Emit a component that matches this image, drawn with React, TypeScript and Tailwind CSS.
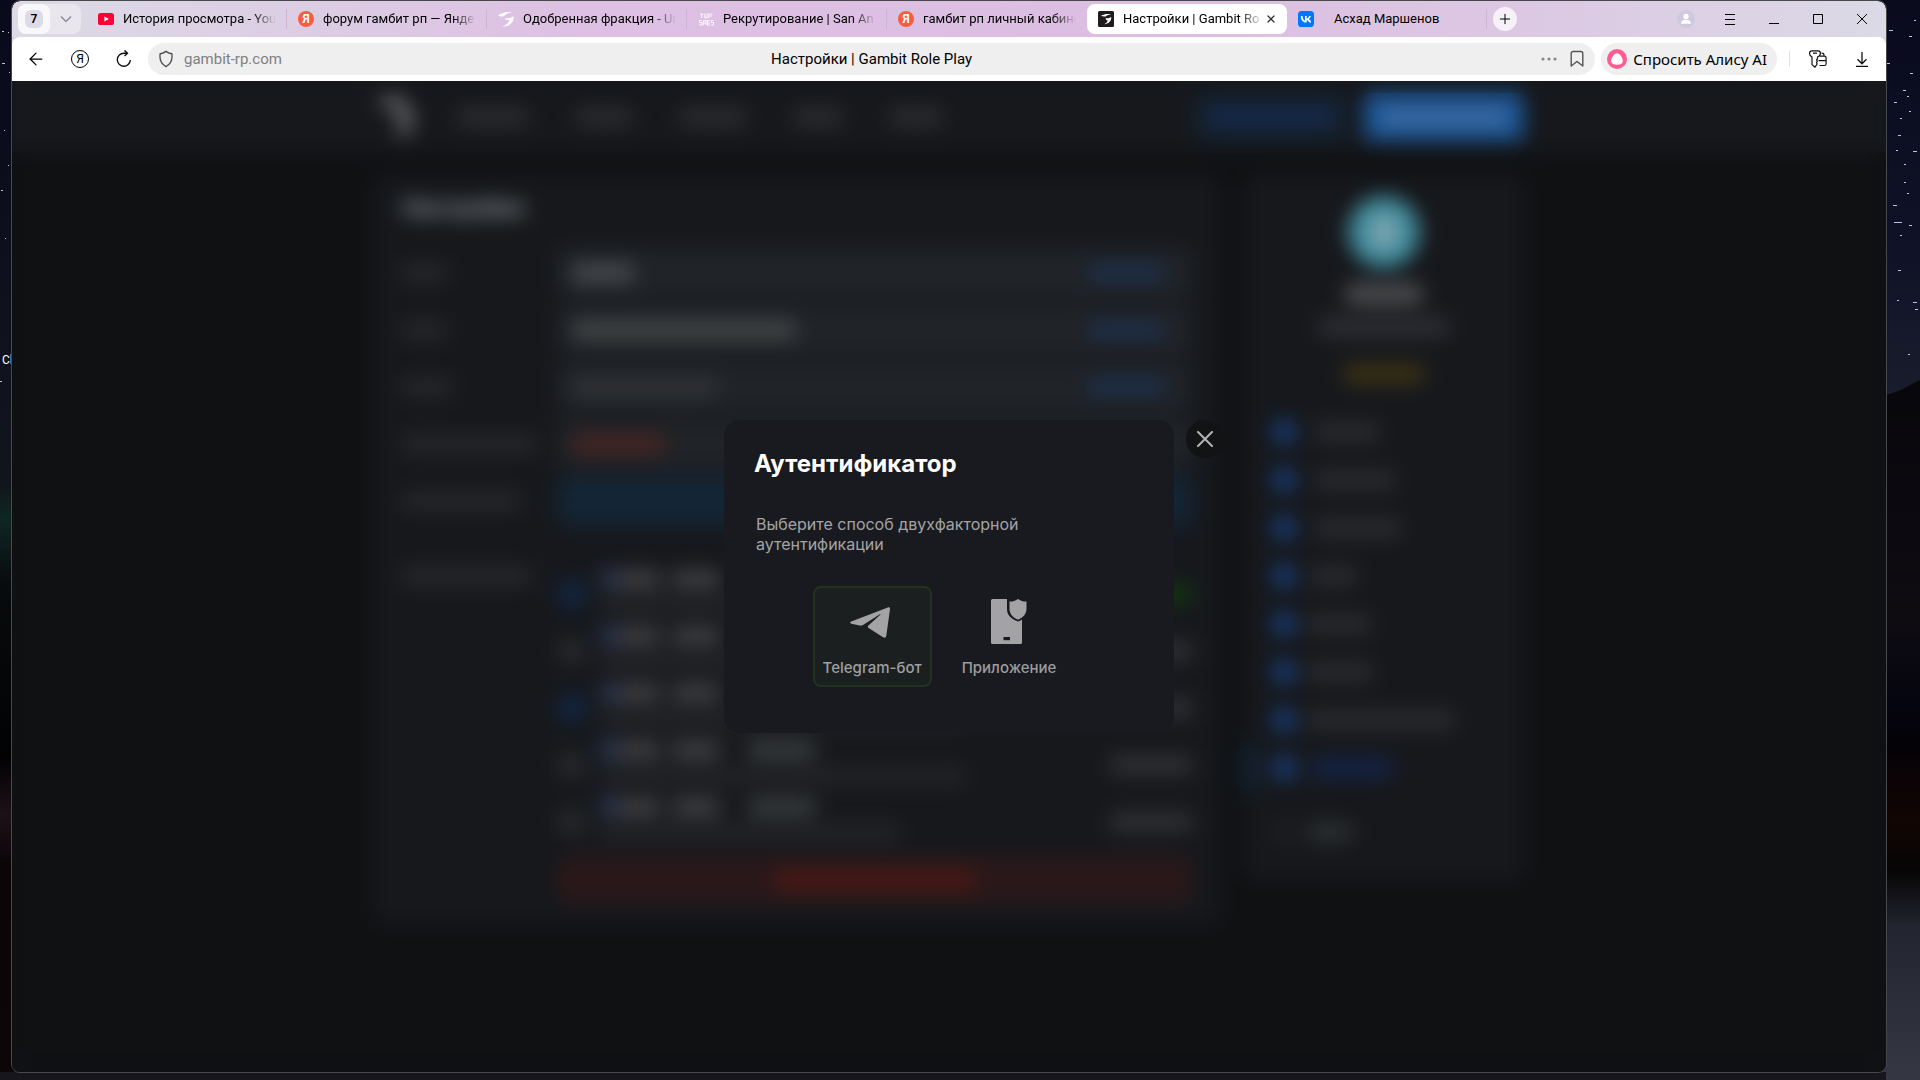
import React from "react";
import { ArrowLeft, Plus, X } from "lucide-react";

function YoutubeIcon() {
  return (
    <svg viewBox="0 0 16 16" className="size-4 shrink-0" aria-hidden="true">
      <rect x="0" y="2" width="16" height="12" rx="2.6" fill="#ff0033" />
      <path d="M6.4 5.4v5.2L10.8 8z" fill="#fff" />
    </svg>
  );
}

function YandexIcon() {
  return (
    <span className="flex size-4 shrink-0 items-center justify-center rounded-full bg-[#fc5b3f] text-xs leading-none font-bold text-white">
      Я
    </span>
  );
}

function ForumIcon() {
  return (
    <svg viewBox="0 0 16 16" className="size-4 shrink-0" aria-hidden="true">
      <path d="M0 4.500C3 1.500 9 .4 14 1.200 10.500 1.900 7.500 3 6 5.200 3.500 5.600 1.500 5.600 0 4.500Z" fill="#fff" />
      <path d="M6.500 7.500C10 7.800 13 6.800 15.500 5.200 16.500 11 12 15.500 4 15.500c4-1.200 7-3.500 7.300-6.500-1.800.3-3.500 0-4.800-1.500Z" fill="#fff" />
    </svg>
  );
}

function RecruitIcon() {
  return (
    <svg viewBox="0 0 16 16" className="size-4 shrink-0" fill="none" stroke="#fff" strokeWidth="1.100" opacity=".85" aria-hidden="true">
      <path d="M2 3h3.500M3.700 3v4M6.800 2.500v4.300h2.400V2.500M11 7V3h3.500M11 5h3" />
      <path d="M4 9.500H1.500v2H4v2.500H1M5.500 14V9.500H8V14M5.500 12H8M12 9.500H9.500V14H12M9.500 12H12M15.500 9.500h-2v2h2V14h-2.200" />
    </svg>
  );
}

function GambitIcon() {
  return (
    <svg viewBox="0 0 16 16" className="size-4 shrink-0" aria-hidden="true">
      <rect width="16" height="16" rx="1.500" fill="#201c1d" />
      <path d="M3 4.800C6 2.900 9.500 2.600 13 3.200 10 3.700 8.600 4.400 7.700 5.500 6 5.700 4.300 5.600 3 4.800Z" fill="#fff" />
      <path d="M7.500 7.200c2.200.2 4.200-.3 5.700-1.200.4 4-2.600 7-7.200 7.200 2.300-.9 3.500-2 3.800-3.600-1-.2-1.800-1-2.300-2.400Z" fill="#fff" />
    </svg>
  );
}

function VkIcon() {
  return (
    <svg viewBox="0 0 16 16" className="size-4 shrink-0" aria-hidden="true">
      <rect width="16" height="16" rx="3.600" fill="#0077ff" />
      <path
        d="M8.500 11.500C4.900 11.500 2.900 9 2.800 4.900h1.800c.1 3 1.400 4.300 2.400 4.500V4.900h1.700v2.600c1-.1 2.100-1.300 2.500-2.600h1.700c-.3 1.600-1.400 2.700-2.300 3.200.8.400 2.100 1.400 2.600 3.400h-1.900c-.4-1.200-1.400-2.200-2.600-2.300v2.300z"
        fill="#fff"
      />
    </svg>
  );
}

type Tab = { title: string; icon: React.ReactNode; active?: boolean; plain?: boolean; line?: boolean };

const tabs: Tab[] = [
  { title: "История просмотра - You", icon: <YoutubeIcon />, line: true },
  { title: "форум гамбит рп — Янде", icon: <YandexIcon />, line: true },
  { title: "Одобренная фракция - Un", icon: <ForumIcon />, line: true },
  { title: "Рекрутирование | San An", icon: <RecruitIcon />, line: true },
  { title: "гамбит рп личный кабине", icon: <YandexIcon /> },
  { title: "Настройки | Gambit Ro", icon: <GambitIcon />, active: true },
  { title: "Асхад Маршенов", icon: <VkIcon />, plain: true, line: true },
];

function BrowserTab({ tab }: { tab: Tab }) {
  return (
    <div
      role="tab"
      aria-selected={!!tab.active}
      className={
        "flex h-[30px] w-[200px] min-w-0 items-center pl-[11px] " +
        (tab.active ? "rounded-lg bg-white pr-2.5" : "")
      }
    >
      {tab.icon}
      <span
        className={
          "min-w-0 flex-1 whitespace-nowrap " +
          (tab.plain
            ? "ml-5"
            : "ml-[9px] [mask-image:linear-gradient(to_right,black_calc(100%-24px),transparent)]")
        }
      >
        {tab.title}
      </span>
      {tab.active && (
        <button type="button" aria-label="Закрыть вкладку" className="ml-0.5">
          <X className="size-3 text-[#333]" strokeWidth={2.5} />
        </button>
      )}
      {!tab.active && <span className={"ml-2.5 h-5 w-px " + (tab.line ? "bg-[#cdb4d3]" : "")} />}
    </div>
  );
}

function TabBar() {
  return (
    <div className="flex h-9 items-center rounded-t-lg bg-[linear-gradient(100deg,#dcdbe6_0%,#dccbe3_18%,#ddc0e3_30%,#dcbee2_62%,#dcc9e3_82%,#dbdae6_100%)] pl-1.5">
      <div className="mr-1.5 flex h-[30px] w-[63px] shrink-0 items-center rounded-lg bg-[#e9e6ee]">
        <button type="button" className="flex h-full w-8 items-center justify-center rounded-lg bg-[#f8f7fa]">
          <span className="flex size-[18px] items-center justify-center rounded-md bg-[#dddbe6] text-xs font-semibold">7</span>
        </button>
        <button type="button" aria-label="Список вкладок" className="flex h-full flex-1 items-center justify-center">
          <svg viewBox="0 0 12 8" className="h-2 w-3" fill="none" stroke="#8f8c96" strokeWidth="1.500">
            <path d="M1 1.500l5 5 5-5" />
          </svg>
        </button>
      </div>
      <div role="tablist" className="flex min-w-0 text-[13px] leading-5">
        {tabs.map((t) => (
          <BrowserTab key={t.title} tab={t} />
        ))}
      </div>
      <button type="button" aria-label="Новая вкладка" className="ml-1.5 flex size-6 shrink-0 items-center justify-center rounded-full bg-[#f6f0f8]">
        <Plus className="size-4" strokeWidth={1.5} />
      </button>
      <div className="ml-auto flex shrink-0 pr-0.5">
        <button type="button" aria-label="Профиль" className="flex h-8 w-11 items-center justify-center">
          <svg viewBox="0 0 18 18" className="size-[18px]">
            <circle cx="9" cy="9" r="9" fill="#cfc9df" />
            <circle cx="9" cy="6.500" r="2.700" fill="#fff" />
            <path d="M4 13.800c0-2.600 2-4 5-4s5 1.400 5 4z" fill="#fff" />
          </svg>
        </button>
        <button type="button" aria-label="Меню" className="flex h-8 w-11 items-center justify-center">
          <svg viewBox="0 0 12 12" className="size-3" stroke="#000"><path d="M1 1.500h10M1 6.500h10M1 11.500h10" /></svg>
        </button>
        <button type="button" aria-label="Свернуть" className="flex h-8 w-11 items-center justify-center">
          <svg viewBox="0 0 12 12" className="size-3" stroke="#000"><path d="M1 10.500h10" /></svg>
        </button>
        <button type="button" aria-label="Развернуть" className="flex h-8 w-11 items-center justify-center">
          <svg viewBox="0 0 12 12" className="size-3" stroke="#000" fill="none"><path d="M1.500 1.500h9v9h-9z" /></svg>
        </button>
        <button type="button" aria-label="Закрыть" className="flex h-8 w-11 items-center justify-center">
          <svg viewBox="0 0 12 12" className="size-3" stroke="#000"><path d="M1 1l10 10M11 1L1 11" /></svg>
        </button>
      </div>
    </div>
  );
}

function ToolBar() {
  return (
    <div className="bg-[#dcd3e4]">
      <div className="flex h-11 items-center rounded-t-lg bg-white pr-0.5 pl-0.5">
        <button type="button" aria-label="Назад" className="flex h-8 w-11 items-center justify-center">
          <ArrowLeft className="size-5" strokeWidth={1.5} />
        </button>
        <button type="button" aria-label="Яндекс" className="flex h-8 w-11 items-center justify-center">
          <span className="flex size-[18px] items-center justify-center rounded-full border border-black text-xs leading-none">Я</span>
        </button>
        <button type="button" aria-label="Обновить" className="flex h-8 w-11 items-center justify-center">
          <svg viewBox="0 0 18 18" className="size-[18px]" fill="none" stroke="#111" strokeWidth="1.400">
            <path d="M15.300 10A6.500 6.500 0 1 1 9 3.200h2.800M9.500.4l3 2.800-3 2.900" />
          </svg>
        </button>
        <div className="ml-0.5 grid h-8 flex-1 grid-cols-[1fr_auto_1fr] items-center rounded-full bg-[#efefef] pr-2.5 pl-2.5 text-[15px]">
          <label className="flex items-center">
            <svg viewBox="0 0 16 18" className="mr-2.5 h-[18px] w-4" fill="none" stroke="#555" strokeWidth="1.400" aria-label="Адрес сайта">
              <path d="M8 1.400c1.800 1.500 3.600 2.200 5.800 2.300.9 5.600-.8 10.200-5.800 12.900C3 13.900 1.300 9.300 2.200 3.700 4.400 3.600 6.200 2.900 8 1.400Z" />
            </svg>
            <input className="w-60 bg-transparent text-[#808080] outline-none" defaultValue="gambit-rp.com" />
          </label>
          <span>Настройки | Gambit Role Play</span>
          <div className="flex items-center justify-end gap-3">
            <button type="button" aria-label="Ещё">
              <svg viewBox="0 0 16 4" className="h-1 w-4" fill="#888">
                <circle cx="2" cy="2" r="1.600" /><circle cx="8" cy="2" r="1.600" /><circle cx="14" cy="2" r="1.600" />
              </svg>
            </button>
            <button type="button" aria-label="В закладки">
              <svg viewBox="0 0 16 18" className="h-[18px] w-4" fill="none" stroke="#555" strokeWidth="1.400">
                <path d="M2.200 16V3.500a2 2 0 0 1 2-2h7.600a2 2 0 0 1 2 2V16L8 11.500z" strokeLinejoin="round" />
              </svg>
            </button>
          </div>
        </div>
        <button type="button" className="ml-1.5 flex h-8 items-center rounded-full bg-[#efefef] pr-2.5 pl-1.5 font-['Noto_Sans',sans-serif] text-[15px] whitespace-nowrap">
          <svg viewBox="0 0 20 20" className="mr-1.5 size-5 shrink-0">
            <circle cx="10" cy="10" r="10" fill="#ff5c95" />
            <path d="M10 4.200c2.800 0 5.800 4.800 5.800 7.600 0 2.700-2.300 3.900-5.800 3.900s-5.800-1.200-5.800-3.900C4.200 9 7.200 4.200 10 4.200Z" fill="#fff" />
          </svg>
          Спросить Алису AI
        </button>
        <span className="mr-1.5 ml-3 h-4 w-px bg-[#e2e2e2]" />
        <button type="button" aria-label="Пароли" className="flex h-8 w-11 items-center justify-center">
          <svg viewBox="0 0 20 20" className="size-5" fill="none" stroke="#111" strokeWidth="1.200" strokeLinejoin="round" strokeLinecap="round">
            <path d="M4 8C2.300 7.200 1.500 5.800 1.500 4.300c0-1.400 1-2.500 2.400-2.500h6.200c1.400 0 2.300 1 2.300 2.500C12.400 6 11.200 7.400 9.500 8v1.800l-1 1.200 1 1.200-1 1.300.7 1.500L7 18.200l-3-2.600zM5.500 4.200h3" />
            <path d="M12 16.500h4.300a1.800 1.800 0 0 0 1.800-1.800V9a1.800 1.800 0 0 0-1.800-1.800H12M11 11.700h7M14 4.200a2 2 0 0 1 2 2v1" />
          </svg>
        </button>
        <button type="button" aria-label="Загрузки" className="flex h-8 w-11 items-center justify-center">
          <svg viewBox="0 0 18 18" className="size-[18px]" fill="none" stroke="#111" strokeWidth="1.300">
            <path d="M9 2v11.500M4.500 9.300L9 13.800l4.500-4.500M3 16.400h12" />
          </svg>
        </button>
      </div>
    </div>
  );
}

const navWidths = ["w-[70px]", "w-[56px]", "w-[66px]", "w-[48px]", "w-[52px]"];

const fields = [
  { label: "w-[44px]", value: "w-[62px] bg-[#46484c]", action: true },
  { label: "w-[44px]", value: "w-[224px] bg-[#434548]", action: true },
  { label: "w-[50px]", value: "w-[146px] bg-[#303236]", action: true },
  { label: "w-[134px]", value: "w-[92px] bg-[#472423]", action: false },
];

const sessions = [
  { icon: "bg-[#11294a]", sub: "w-[240px]", action: "bg-[#12380f]" },
  { icon: "bg-[#292b2e]", sub: "w-[280px]", action: "bg-[#313235]" },
  { icon: "bg-[#11294a]", sub: "w-[365px]", action: "bg-[#313235]" },
  { icon: "bg-[#292b2e]", sub: "w-[365px]", action: "bg-[#313235]" },
  { icon: "bg-[#292b2e]", sub: "w-[300px]", action: "bg-[#313235]" },
];

const menu = [
  "ml-5 w-[62px] bg-[#2b2d30]",
  "ml-5 w-[78px] bg-[#2b2d30]",
  "ml-5 w-[84px] bg-[#2b2d30]",
  "ml-4 w-[44px] bg-[#2b2d30]",
  "ml-3 w-[62px] bg-[#2b2d30]",
  "ml-3 w-[64px] bg-[#2b2d30]",
  "ml-3 w-[146px] bg-[#2b2d30]",
  "ml-4 w-[80px] bg-[#14244a]",
];

function SettingsPage() {
  return (
    <div className="flex-1 bg-[#0f1113]" aria-hidden="true">
      <header className="h-[71px] bg-[#16181c]">
        <div className="mx-auto flex h-full max-w-[1150px] items-center">
          <svg viewBox="0 0 44 48" className="h-12 w-11" fill="#66676a">
            <path d="M2 8C12 2 26 0 34 12c8 10 6 24-4 34-4-3-6-5-6-9 3-8 2-15-4-20C14 14 8 13 2 8Z" />
          </svg>
          <div className="ml-10 flex gap-12">
            {navWidths.map((w, i) => (
              <span key={i} className={"h-[18px] rounded bg-[#2c2d31] " + w} />
            ))}
          </div>
          <div className="ml-auto flex gap-4">
            <span className="flex h-12 w-[154px] items-center justify-center rounded-lg bg-[#14202d]">
              <span className="h-[18px] w-[126px] rounded bg-[#152a4e]" />
            </span>
            <span className="flex h-12 w-[160px] items-center justify-center rounded-lg bg-[#1a5596]">
              <span className="h-[18px] w-[126px] rounded bg-[#3f6a9e]" />
            </span>
          </div>
        </div>
      </header>
      <div className="mx-auto mt-6 flex max-w-[1150px] items-start gap-6">
        <main className="flex-1 rounded-xl bg-[#16181c] px-7 pt-4 pb-5">
          <div className="h-8 text-2xl leading-8 font-bold text-[#8b9396]">Настройки</div>
          <div className="mt-6 grid grid-cols-[156px_1fr] gap-y-[7px]">
            {fields.map((f, i) => (
              <React.Fragment key={i}>
                <div className="flex items-center">
                  <span className={"h-[18px] rounded bg-[#26282b] " + f.label} />
                </div>
                <div className="flex h-[50px] items-center justify-between rounded-lg bg-[#202327] px-3.5 pr-7">
                  <span className={"h-5 rounded " + f.value} />
                  {f.action && <span className="h-[18px] w-[76px] rounded bg-[#1d2f4c]" />}
                </div>
              </React.Fragment>
            ))}
            <div className="flex items-center">
              <span className="h-[18px] w-[118px] rounded bg-[#26282b]" />
            </div>
            <div className="h-[50px] rounded-lg bg-[#142535]" />
            <div className="mt-6">
              <span className="mt-2.5 block h-[18px] w-[130px] rounded bg-[#26282b]" />
            </div>
            <div className="mt-8">
              {sessions.map((s, i) => (
                <div key={i} className="flex h-[57px] items-center pl-0.5">
                  <span className={"size-6 rounded-md " + s.icon} />
                  <div className="ml-4 flex flex-col gap-2 pb-1">
                    <div className="flex">
                      <span className="h-[18px] w-5 rounded bg-[#2d3852]" />
                      <span className="h-[18px] w-10 bg-[#424144]" />
                      <span className="ml-3 h-[18px] w-12 rounded bg-[#3f4143]" />
                      <span className="ml-7 h-[18px] w-[68px] rounded bg-[#3a3d3f]" />
                    </div>
                    <span className={"h-[18px] rounded bg-[#222427] " + s.sub} />
                  </div>
                  <span className={"ml-auto h-[18px] w-[82px] rounded " + s.action} />
                </div>
              ))}
              <div className="mt-1.5 flex h-12 items-center justify-center rounded-lg bg-[#2a1819]">
                <span className="h-5 w-[200px] rounded bg-[#4a1816]" />
              </div>
            </div>
          </div>
        </main>
        <aside className="flex w-[280px] flex-col rounded-xl bg-[#16181c] pt-5 pb-6">
          <div className="flex flex-col items-center">
            <span className="flex size-[72px] items-center justify-center rounded-full bg-[#428c9d]">
              <span className="h-8 w-6 rounded-full bg-[#83a9b0]" />
            </span>
            <span className="mt-4 h-5 w-[76px] rounded bg-[#505052]" />
            <span className="mt-3.5 h-[18px] w-[130px] rounded bg-[#2e3035]" />
            <span className="mt-7 h-5 w-20 rounded bg-[#3c3114]" />
          </div>
          <div className="mt-6">
            {menu.map((m, i) => (
              <div key={i} className="flex h-12 items-center">
                <span className={"h-12 w-2 rounded " + (i === 7 ? "bg-[#133050]" : "")} />
                <span className="ml-5 size-6 rounded-lg bg-[#173a70]" />
                <span className={"h-[18px] rounded " + m} />
              </div>
            ))}
          </div>
          <div className="mt-4 flex h-12 items-center pl-7">
            <span className="size-6 rounded-lg bg-[#1c1e21]" />
            <span className="ml-3 h-[18px] w-11 rounded bg-[#2e3134]" />
          </div>
        </aside>
      </div>
    </div>
  );
}

function AuthDialog() {
  return (
    <div
      role="dialog"
      aria-modal="true"
      aria-labelledby="auth-title"
      className="relative w-[450px] rounded-2xl bg-[#191a1f] pt-7 pr-[49px] pb-[46px] pl-[30px] font-[Inter,sans-serif]"
    >
      <h1 id="auth-title" className="text-2xl leading-8 font-bold text-white">Аутентификатор</h1>
      <p className="mt-[34px] pl-0.5 text-base leading-5 text-[#a4a4a6]">
        Выберите способ двухфакторной аутентификации
      </p>
      <div className="mt-8 flex justify-center gap-5">
        <button type="button" className="flex h-[101px] flex-col items-center rounded-lg border-2 border-[#20331f] bg-[#1b1f1f] px-2 text-[#9fa0a1]">
          <svg viewBox="0 0 40 31" className="mt-[19px] mr-1 h-[31px] w-10" fill="#a3a3a5">
            <path d="M37.800.4C39.300-.1 40.200.7 40 2.300L36.300 28.700c-.4 2-1.500 2.500-3.200 1.500L18.600 21c-1-.7-1.100-1.600-.2-2.600L30.300 7.800c.6-.6 0-.9-.8-.4L13 18c-1.100.7-2 .9-3.300.6L1.400 16.700C-.4 16.200-.4 15.100 1.300 14.400Z" />
          </svg>
          <span className="mt-5 text-[15px] leading-5 font-medium">Telegram-бот</span>
        </button>
        <button type="button" className="flex h-[101px] flex-col items-center rounded-lg border-2 border-transparent px-2 text-[#9c9c9e]">
          <svg viewBox="0 0 36 45" className="mt-[11px] h-[45px] w-9" fill="#a3a3a5">
            <path d="M1.500 0H16v10c0 6 4 10 11 12.500 1.500-.5 2.800-1 4-2V43.500a1.500 1.500 0 0 1-1.500 1.500h-28A1.500 1.500 0 0 1 0 43.500v-42A1.500 1.500 0 0 1 1.500 0Z" />
            <path d="M27 0c2.300 1.700 5 2.500 8.500 2.600V9.500c0 5.200-3 8.800-8.500 11.200-5.500-2.400-8.500-6-8.500-11.200V2.600C22 2.500 24.700 1.700 27 0Z" />
            <path d="M12.500 38h6.500v3.200h-6.500z" fill="#191a1f" />
          </svg>
          <span className="mt-3.5 text-[15px] leading-5 font-medium">Приложение</span>
        </button>
      </div>
      <button
        type="button"
        aria-label="Закрыть окно"
        className="absolute top-0 left-full ml-3 flex size-[38px] items-center justify-center rounded-full bg-[#121314]"
      >
        <svg viewBox="0 0 16 16" className="size-4" stroke="#b4b4b5" strokeWidth="2" strokeLinecap="round">
          <path d="M1 1l14 14M15 1L1 15" />
        </svg>
      </button>
    </div>
  );
}

function Wallpaper() {
  const stars: [number, number, number][] = [
    [1889, 30, 4], [1909, 36, 3], [1914, 20, 2], [1903, 90, 3], [1907, 96, 2], [1894, 102, 3],
    [1909, 111, 2], [1900, 118, 2], [1898, 135, 3], [1913, 151, 4], [1896, 150, 2], [1904, 164, 2],
    [1887, 63, 3], [1910, 73, 3], [1904, 182, 2], [1907, 193, 2], [1893, 205, 4], [1894, 222, 8], [1909, 225, 3],
    [1900, 235, 2], [1898, 270, 3], [1897, 300, 2], [1913, 302, 4], [1915, 309, 3], [1908, 354, 2],
    [2, 31, 2], [8, 32, 1], [2, 63, 3], [9, 72, 1], [11, 86, 1], [4, 130, 1], [8, 165, 1], [1, 190, 2], [5, 238, 1], [0, 381, 2],
  ];
  return (
    <svg className="absolute inset-0 size-full" viewBox="0 0 1920 1080" preserveAspectRatio="none" aria-hidden="true">
      <defs>
        <linearGradient id="sky" x1="0" y1="0" x2="0" y2="1">
          <stop offset="0" stopColor="#090a1c" />
          <stop offset=".22" stopColor="#0f1226" />
          <stop offset=".36" stopColor="#191c2c" />
        </linearGradient>
        <linearGradient id="land" x1="0" y1="0" x2="0" y2="1">
          <stop offset="0" stopColor="#08070c" />
          <stop offset=".35" stopColor="#0e0b11" />
          <stop offset=".46" stopColor="#050510" />
          <stop offset=".52" stopColor="#040206" />
          <stop offset=".63" stopColor="#120504" />
          <stop offset=".7" stopColor="#060505" />
          <stop offset=".78" stopColor="#22252f" />
          <stop offset="1" stopColor="#353743" />
        </linearGradient>
        <linearGradient id="left" x1="0" y1="0" x2="0" y2="1">
          <stop offset="0" stopColor="#080a1c" />
          <stop offset=".35" stopColor="#10121f" />
          <stop offset=".45" stopColor="#10161b" />
          <stop offset=".48" stopColor="#0f2625" />
          <stop offset=".54" stopColor="#080b0d" />
          <stop offset=".7" stopColor="#020203" />
          <stop offset=".755" stopColor="#1d1116" />
          <stop offset=".8" stopColor="#0b0508" />
          <stop offset="1" stopColor="#0b0607" />
        </linearGradient>
      </defs>
      <rect width="1920" height="1080" fill="url(#sky)" />
      <path d="M1880 396C1900 393 1910 384 1920 380V1080H1880Z" fill="url(#land)" />
      <rect width="14" height="1080" fill="url(#left)" />
      <rect y="1072" width="1886" height="8" fill="#17161d" />
      {stars.map(([x, y, w], i) => (
        <rect key={i} x={x} y={y} width={w} height="1" fill="#b9c4e4" />
      ))}
    </svg>
  );
}

export default function App() {
  return (
    <div className="relative flex min-h-screen flex-col overflow-hidden bg-[#0d0f28] pt-px pr-[34px] pb-2 pl-3 font-[Roboto,sans-serif] text-black">
      <Wallpaper />
      <span className="absolute top-[352px] left-0.5 text-xs leading-4 text-white">Cl</span>
      <div className="relative flex flex-1 flex-col overflow-hidden rounded-lg outline outline-[#47484c]">
        <TabBar />
        <ToolBar />
        <div className="relative flex flex-1 flex-col overflow-hidden">
          <SettingsPage />
          <div className="absolute inset-0 flex items-center justify-center backdrop-blur-[10px]">
            <AuthDialog />
          </div>
        </div>
      </div>
    </div>
  );
}
